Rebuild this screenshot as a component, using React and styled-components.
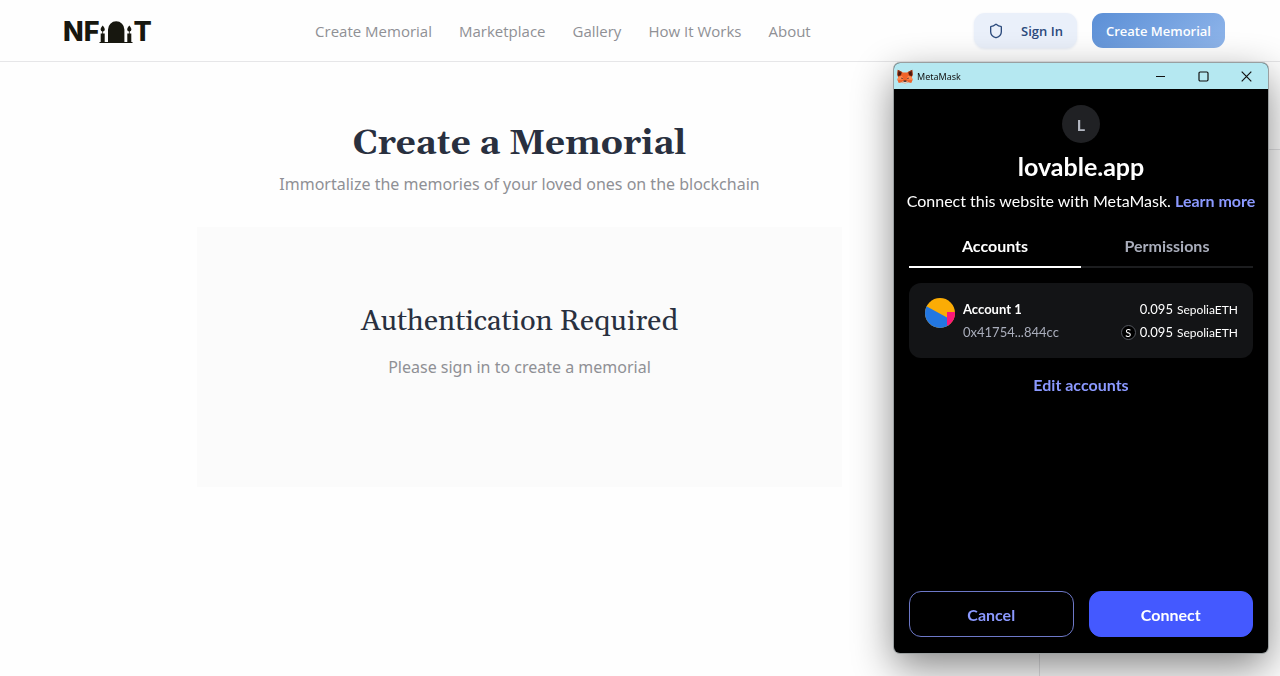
import React from "react";
import styled, { createGlobalStyle } from "styled-components";
import { Shield } from "lucide-react";

const navLinks = ["Create Memorial", "Marketplace", "Gallery", "How It Works", "About"];

export default function App() {
  return (
    <>
      <GlobalStyle />
      <Page>
        <Navbar />
        <Body>
          <Main>
            <Title>Create a Memorial</Title>
            <Lead>Immortalize the memories of your loved ones on the blockchain</Lead>
            <AuthCard>
              <AuthTitle>Authentication Required</AuthTitle>
              <Lead>Please sign in to create a memorial</Lead>
            </AuthCard>
          </Main>
          <Aside>
            <AsideHead />
          </Aside>
        </Body>
      </Page>
      <WalletPopup />
    </>
  );
}

function Navbar() {
  return (
    <Header>
      <Logo href="#" aria-label="NFT memorial">
        NF
        <LogoMark />T
      </Logo>
      <Nav>
        {navLinks.map((link) => (
          <NavLink href="#" key={link}>
            {link}
          </NavLink>
        ))}
      </Nav>
      <HeaderActions>
        <HeaderButton>
          <Shield size={16} strokeWidth={2} />
          Sign In
        </HeaderButton>
        <HeaderButton $primary>Create Memorial</HeaderButton>
      </HeaderActions>
    </Header>
  );
}

function WalletPopup() {
  return (
    <Popup>
      <TitleBar>
        <Fox />
        <TitleText>MetaMask</TitleText>
        <WindowButton aria-label="Minimize">
          <svg width="11" height="11" viewBox="0 0 11 11">
            <path d="M1 5.5h9" />
          </svg>
        </WindowButton>
        <WindowButton aria-label="Maximize">
          <svg width="11" height="11" viewBox="0 0 11 11">
            <rect x="1" y="1" width="9" height="9" rx="1.2" />
          </svg>
        </WindowButton>
        <WindowButton aria-label="Close">
          <svg width="11" height="11" viewBox="0 0 11 11">
            <path d="M.7.7l9.6 9.6M10.3.7L.7 10.3" />
          </svg>
        </WindowButton>
      </TitleBar>
      <PopupBody>
        <SiteAvatar>L</SiteAvatar>
        <SiteName>lovable.app</SiteName>
        <SiteText>
          Connect this website with MetaMask. <a href="#">Learn more</a>
        </SiteText>
        <Tabs role="tablist">
          <Tab role="tab" aria-selected="true" $active>
            Accounts
          </Tab>
          <Tab role="tab" aria-selected="false">
            Permissions
          </Tab>
        </Tabs>
        <Account>
          <AccountIcon />
          <AccountInfo>
            <AccountName>Account 1</AccountName>
            <Address>0x41754...844cc</Address>
          </AccountInfo>
          <Balances>
            <Balance>
              0.095 <small>SepoliaETH</small>
            </Balance>
            <Balance>
              <Token>S</Token>
              0.095 <small>SepoliaETH</small>
            </Balance>
          </Balances>
        </Account>
        <EditButton>Edit accounts</EditButton>
        <PopupActions>
          <ActionButton>Cancel</ActionButton>
          <ActionButton $primary>Connect</ActionButton>
        </PopupActions>
      </PopupBody>
    </Popup>
  );
}

//drawings
function LogoMark() {
  return (
    <svg width="34" height="24" viewBox="0 0 34 24" fill="#17170f" aria-hidden="true">
      <path d="M9 22.500V9.500a8.200 8.200 0 0 1 16.400 0v13z" />
      <path d="M.5 21.900h33v1.200H.5z" />
      <path d="M1.700 13.500h4v9h-4zM28.300 13.500h4v9h-4z" />
      <path d="M3.700 5.500c1.500 1.900 2.100 2.900 2.100 3.900a2.100 2.100 0 0 1-4.200 0c0-1 .6-2 2.100-3.900zM30.300 5.500c1.500 1.900 2.100 2.900 2.100 3.900a2.100 2.100 0 0 1-4.200 0c0-1 .6-2 2.100-3.900z" />
      <path d="M3.300 11h.8v3h-.8zM29.900 11h.8v3h-.8z" />
    </svg>
  );
}

function Fox() {
  return (
    <svg width="16" height="15" viewBox="0 0 16 15" aria-hidden="true">
      <path fill="#f0642a" d="M.8.8L6 3.500h4L15.200.8l.5 4.700-.9 2.500.8 3-1.300 3-3.300-.8-2 1H7l-2-1-3.300.8L.4 11l.8-3L.3 5.500z" />
      <path fill="#8a3218" d="M.8.8L5 3 4 6.500.9 7.600.3 5.500zM15.200.8L11 3l1 3.500 3.100 1.100.6-2.100z" />
      <path fill="#4a160c" d="M1.500 2.200L4.300 4l-.8 2-2.500.9zM14.500 2.200L11.700 4l.8 2 2.500.9z" />
      <path fill="#ff8a50" d="M1.200 8L5 6.700l1.200 3.800-5.800.5zM14.800 8L11 6.700l-1.200 3.800 5.800.5z" />
      <path fill="#3a2a2a" d="M4.300 8.500l2 .9-1.700.5zM11.700 8.500l-2 .9 1.700.5z" />
      <path fill="#e5d3c8" d="M5 12.800l1.500-.5h3l1.500.5-2 1.500H7z" />
      <path fill="#201a1a" d="M6.700 11.600h2.600l.2 1.200h-3z" />
    </svg>
  );
}

function AccountIcon() {
  return (
    <svg width="30" height="30" viewBox="0 0 30 30" aria-hidden="true">
      <clipPath id="account-circle">
        <circle cx="15" cy="15" r="15" />
      </clipPath>
      <g clipPath="url(#account-circle)">
        <path fill="#fbac05" d="M0 0h30v30H0z" />
        <path fill="#2377e1" d="M0 7.500l22 12V30H0z" />
        <path fill="#fb1879" d="M22 14h8v11l-8 3z" />
        <path fill="#2377e1" d="M22 27.500l3-.8V30h-3z" />
      </g>
    </svg>
  );
}

//styling using styled components
const GlobalStyle = createGlobalStyle`
  * {
    box-sizing: border-box;
  }
  body {
    margin: 0;
    background: #fefefe;
    color: #29303f;
    font-family: "Open Sans", "Noto Sans", sans-serif;
  }
  button {
    font-family: inherit;
    cursor: pointer;
  }
`;

const Page = styled.div`
  min-height: 100vh;
  display: flex;
  flex-direction: column;
`;

const Header = styled.header`
  display: flex;
  align-items: center;
  justify-content: space-between;
  height: 62px;
  padding: 0 55px 0 63px;
  border-bottom: 1px solid #e6e6e8;
`;

const Logo = styled.a`
  display: flex;
  align-items: center;
  padding-top: 2px;
  color: #17170f;
  font-family: Inter, "Liberation Sans", sans-serif;
  font-size: 27px;
  line-height: 32px;
  font-weight: 800;
  text-decoration: none;
`;

const Nav = styled.nav`
  display: flex;
  gap: 27px;
`;

const NavLink = styled.a`
  color: #8f9095;
  font-size: 15px;
  line-height: 24px;
  text-decoration: none;
`;

const HeaderActions = styled.div`
  display: flex;
  gap: 15px;
`;

const HeaderButton = styled.button`
  display: flex;
  align-items: center;
  gap: 17px;
  height: 35px;
  padding: 0 14px;
  border: 0;
  border-radius: 11px;
  background: ${(props) =>
    props.$primary ? "linear-gradient(135deg, #5b8fd6, #8fb5ea)" : "#eaf0fa"};
  color: ${(props) => (props.$primary ? "#fff" : "#2b4a7c")};
  box-shadow: ${(props) => (props.$primary ? "none" : "0 1px 3px #e4eaf4")};
  font-size: 13px;
  font-weight: 600;
`;

const Body = styled.div`
  flex: 1;
  display: flex;
`;

const Main = styled.main`
  flex: 1;
  display: flex;
  flex-direction: column;
  align-items: center;
  padding: 56px 32px;
`;

const Title = styled.h1`
  margin: 0;
  font-family: Gelasio, Georgia, "DejaVu Serif", serif;
  font-size: 35px;
  line-height: 52px;
  font-weight: 700;
`;

const Lead = styled.p`
  margin: 0;
  color: #8f9095;
  font-family: "Noto Sans", sans-serif;
  font-size: 16px;
  line-height: 28px;
`;

const AuthCard = styled.section`
  display: flex;
  flex-direction: column;
  align-items: center;
  width: 100%;
  max-width: 645px;
  margin-top: 29px;
  padding: 73px 32px 106px;
  background: #fbfbfb;
`;

const AuthTitle = styled.h2`
  margin: 0 0 9px;
  font-family: Gelasio, Georgia, "DejaVu Serif", serif;
  font-size: 29px;
  line-height: 44px;
  font-weight: 400;
`;

const Aside = styled.aside`
  width: 241px;
  border-left: 1px solid #e2e2e4;
`;

const AsideHead = styled.div`
  height: 88px;
  border-bottom: 1px solid #e2e2e4;
`;

const Popup = styled.section`
  position: fixed;
  top: 63px;
  right: 12px;
  bottom: 23px;
  width: 374px;
  display: flex;
  flex-direction: column;
  overflow: hidden;
  border-radius: 6px;
  background: #000;
  color: #fff;
  box-shadow: 0 0 0 1px #9a9fa0, 0 14px 40px rgba(0, 0, 0, 0.48);
  font-family: Lato, sans-serif;
`;

const TitleBar = styled.div`
  display: flex;
  align-items: center;
  height: 26px;
  padding-left: 3px;
  background: #b5e8f1;
`;

const TitleText = styled.span`
  flex: 1;
  margin-left: 4px;
  color: #111;
  font-family: "Noto Sans", sans-serif;
  font-size: 9px;
`;

const WindowButton = styled.button`
  display: flex;
  align-items: center;
  justify-content: center;
  width: 43px;
  height: 26px;
  padding: 0;
  border: 0;
  background: none;
  svg {
    fill: none;
    stroke: #111;
    stroke-width: 1.2;
  }
`;

const PopupBody = styled.div`
  flex: 1;
  display: flex;
  flex-direction: column;
  align-items: center;
  padding: 16px 15px;
`;

const SiteAvatar = styled.div`
  display: flex;
  align-items: center;
  justify-content: center;
  width: 38px;
  height: 38px;
  border-radius: 50%;
  background: #202124;
  color: #b4b8c2;
  font-size: 16px;
  font-weight: 700;
`;

const SiteName = styled.h2`
  margin: 8px 0 0;
  font-size: 25px;
  line-height: 30px;
  font-weight: 700;
`;

const SiteText = styled.p`
  margin: 8px 0 0;
  font-size: 16px;
  line-height: 24px;
  white-space: nowrap;
  a {
    color: #8b99ff;
    font-weight: 700;
    text-decoration: none;
  }
`;

const Tabs = styled.div`
  display: flex;
  width: 100%;
  margin-top: 12px;
`;

const Tab = styled.button`
  flex: 1;
  height: 43px;
  padding: 0;
  border: 0;
  border-bottom: 2px solid ${(props) => (props.$active ? "#fff" : "#1c1d1f")};
  background: none;
  color: ${(props) => (props.$active ? "#fff" : "#a9adbb")};
  font-size: 16px;
  font-weight: 700;
`;

const Account = styled.div`
  display: flex;
  gap: 8px;
  width: 100%;
  margin-top: 15px;
  padding: 15px 15px 14px 16px;
  border-radius: 12px;
  background: #131416;
`;

const AccountInfo = styled.div`
  flex: 1;
  line-height: 23px;
`;

const AccountName = styled.div`
  font-size: 13px;
  font-weight: 700;
`;

const Address = styled.div`
  color: #a9adbb;
  font-size: 13px;
`;

const Balances = styled.div`
  display: flex;
  flex-direction: column;
  align-items: flex-end;
`;

const Balance = styled.div`
  display: flex;
  align-items: center;
  gap: 4px;
  font-size: 13px;
  line-height: 23px;
  small {
    font-size: 12px;
  }
`;

const Token = styled.span`
  display: flex;
  align-items: center;
  justify-content: center;
  width: 15px;
  height: 15px;
  border: 1px solid #55585f;
  border-radius: 50%;
  background: #000;
  font-size: 11px;
`;

const EditButton = styled.button`
  margin-top: 15px;
  padding: 0;
  border: 0;
  background: none;
  color: #8b99ff;
  font-size: 16px;
  line-height: 24px;
  font-weight: 700;
`;

const PopupActions = styled.div`
  display: flex;
  gap: 15px;
  width: 100%;
  margin-top: auto;
`;

const ActionButton = styled.button`
  flex: 1;
  height: 46px;
  border: 1px solid ${(props) => (props.$primary ? "#4459ff" : "#6d78c8")};
  border-radius: 12px;
  background: ${(props) => (props.$primary ? "#4459ff" : "transparent")};
  color: ${(props) => (props.$primary ? "#fff" : "#8b99ff")};
  font-size: 16px;
  font-weight: 700;
`;
